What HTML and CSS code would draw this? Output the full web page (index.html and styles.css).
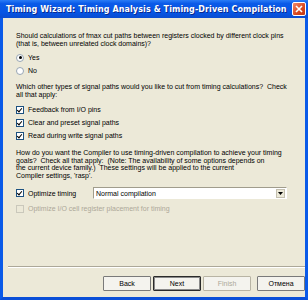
FILE: index.html
```html
<!doctype html>
<html lang="en">
<head>
    <meta charset="UTF-8">
    <title>Timing Wizard</title>
    <link rel="stylesheet" href="styles.css">
</head>
<body>
<div class="window">
    <div class="titlebar">
        <span class="title">Timing Wizard: Timing Analysis &amp; Timing-Driven Compilation</span>
        <span class="close">
            <svg width="8" height="8" viewBox="0 0 8 8"><path d="M1 1L7 7M7 1L1 7" stroke="#fff" stroke-width="1.6"/></svg>
        </span>
    </div>
    <div class="content">
        <p class="text q1">Should calculations of fmax cut paths between registers clocked by different clock pins (that is, between unrelated clock domains)?</p>
        <div class="opt"><span class="radio on"></span>Yes</div>
        <div class="opt"><span class="radio"></span>No</div>

        <p class="text q2">Which other types of signal paths would you like to cut from timing calculations?&nbsp; Check all that apply:</p>
        <div class="opt"><span class="check on"></span>Feedback from I/O pins</div>
        <div class="opt"><span class="check on"></span>Clear and preset signal paths</div>
        <div class="opt"><span class="check on"></span>Read during write signal paths</div>

        <p class="text q3">How do you want the Compiler to use timing-driven compilation to achieve your timing<br>goals?&nbsp; Check all that apply:&nbsp; (Note: The availability of some options depends on<br>the current device family.)&nbsp; These settings will be applied to the current<br>Compiler settings, 'rasp'.</p>
        <div class="opt row">
            <span class="check on"></span><span class="label">Optimize timing</span>
            <div class="select">
                <span class="value">Normal compilation</span>
                <span class="arrow"><svg width="5" height="3" viewBox="0 0 5 3"><path d="M0 0H5L2.5 3Z" fill="#000"/></svg></span>
            </div>
        </div>
        <div class="opt disabled"><span class="check"></span>Optimize I/O cell register placement for timing</div>
    </div>
    <div class="footer">
        <div class="sep"></div>
        <div class="buttons">
            <button>Back</button>
            <button class="default">Next</button>
            <button disabled>Finish</button>
            <button class="cancel">Отмена</button>
        </div>
    </div>
</div>
</body>
</html>
```

FILE: styles.css
```css
body {
    margin: 0;
    font-family: "Liberation Sans", Arial, sans-serif;
    font-size: 7px;
    color: #000;
}

.window {
    width: 308px;
    height: 300px;
    box-sizing: border-box;
    display: flex;
    flex-direction: column;
    background-color: #ece9d8;
    border-left: 3px solid #0a5ae8;
    border-right: 3px solid #0a5ae8;
    border-bottom: 3px solid #0a4fd8;
}

.titlebar {
    height: 18px;
    margin: 0 -3px;
    display: flex;
    align-items: center;
    justify-content: space-between;
    padding: 0 2px 0 6px;
    background: linear-gradient(#2a7cf6 0%, #0a5ae8 20%, #0655e4 70%, #0a4cd0 100%);
}

.title {
    color: #fff;
    font-family: "DejaVu Sans", sans-serif;
    font-weight: bold;
    font-size: 8px;
    letter-spacing: 0.1px;
    text-shadow: 1px 1px 0 #0a2a90;
}

.close {
    width: 12px;
    height: 12px;
    display: flex;
    align-items: center;
    justify-content: center;
    background: linear-gradient(135deg, #f08a6c, #d8461c 60%, #c03a14);
    border: 1px solid #fff;
    border-radius: 2px;
}

.content {
    flex: 1;
    padding: 14px 10px 0 13px;
}

.text {
    margin: 0;
    line-height: 7.5px;
}

.q1 {
    margin-bottom: 4px;
}

.q2 {
    margin-top: 6px;
    margin-bottom: 5px;
}

.q3 {
    margin-top: 7px;
    margin-bottom: 7px;
}

.opt {
    display: flex;
    align-items: center;
    height: 13px;
}

.radio, .check {
    width: 8px;
    height: 8px;
    box-sizing: border-box;
    margin-right: 4px;
    background-color: #fff;
    border: 1px solid #1c5180;
    position: relative;
}

.radio {
    border-radius: 50%;
    border-color: #98a6b4;
}

.radio.on::after {
    content: "";
    position: absolute;
    left: 1.5px;
    top: 1.5px;
    width: 3px;
    height: 3px;
    border-radius: 50%;
    background-color: #000;
}

.check.on::after {
    content: "";
    position: absolute;
    left: 1px;
    top: 0;
    width: 2px;
    height: 4px;
    border-right: 1.5px solid #000;
    border-bottom: 1.5px solid #000;
    transform: rotate(40deg);
}

.row {
    height: 14px;
}

.label {
    width: 65px;
}

.select {
    width: 194px;
    height: 12px;
    box-sizing: border-box;
    display: flex;
    align-items: center;
    justify-content: space-between;
    background-color: #fff;
    border: 1px solid #a09c8c;
    border-color: #a09c8c #fff #fff #a09c8c;
    padding-left: 2px;
}

.arrow {
    width: 9px;
    height: 9px;
    margin-right: 1px;
    display: flex;
    align-items: center;
    justify-content: center;
    background-color: #ece9d8;
    border: 1px solid #c4c0b0;
    box-sizing: border-box;
}

.disabled {
    color: #aca899;
    margin-top: 2px;
}

.disabled .check {
    border-color: #cac8bb;
    background-color: #ece9d8;
}

.footer {
    padding: 0 0 6px 5px;
}

.sep {
    height: 0;
    border-top: 1px solid #aca899;
    border-bottom: 1px solid #fff;
    margin-bottom: 8px;
}

.buttons {
    display: flex;
    justify-content: flex-end;
    gap: 2px;
}

button {
    width: 48px;
    height: 15px;
    padding: 0;
    font-family: "Liberation Sans", Arial, sans-serif;
    font-size: 7px;
    color: #000;
    background-color: #f4f3ee;
    border: 1px solid #7a7a7a;
    border-radius: 1px;
}

button.default {
    border: 1px solid #2a2a2a;
    box-shadow: inset 0 0 0 1px #8a8a8a;
}

button:disabled {
    color: #aca899;
    border-color: #b8b4a4;
}

button.cancel {
    margin-left: 4px;
}
```
